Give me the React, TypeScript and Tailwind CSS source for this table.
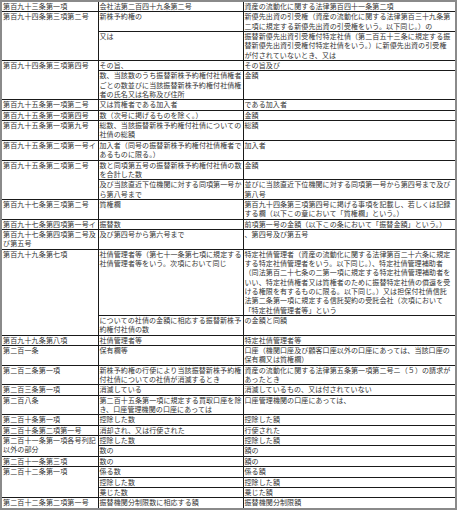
type Line = string | string[]
type Sub = [Line, Line]
type Row = { head: Line; subs: Sub[] }

const rows: Row[] = [
  { head: '第百九十三条第一項', subs: [['会社法第二百四十九条第二号', '資産の流動化に関する法律第百四十一条第二項']] },
  {
    head: '第百九十四条第三項第二号',
    subs: [
      ['新株予約権の', ['新優先出資の引受権（資産の流動化に関する法律第百三十九条第', '二項に規定する新優先出資の引受権をいう。以下同じ。）の']],
      ['又は', ['振替新優先出資引受権付特定社債（第二百五十三条に規定する振', '替新優先出資引受権付特定社債をいう。）に新優先出資の引受権', 'が付されていないとき、又は']],
    ],
  },
  {
    head: '第百九十四条第三項第四号',
    subs: [
      ['その旨、', 'その旨及び'],
      [['数、当該数のうち振替新株予約権付社債権者', 'ごとの数並びに当該振替新株予約権付社債権', '者の氏名又は名称及び住所'], '金額'],
    ],
  },
  { head: '第百九十五条第一項第二号', subs: [['又は質権者である加入者', 'である加入者']] },
  { head: '第百九十五条第一項第四号', subs: [['数（次号に掲げるものを除く。）', '金額']] },
  { head: '第百九十五条第一項第九号', subs: [[['総数、当該振替新株予約権付社債についての', '社債の総額'], '総額']] },
  { head: '第百九十五条第二項第一号イ', subs: [[['加入者（同号の振替新株予約権付社債権者で', 'あるものに限る。）'], '加入者']] },
  {
    head: '第百九十五条第二項第二号',
    subs: [
      [['数と同項第五号の振替新株予約権付社債の数', 'を合計した数'], '金額'],
      [['及び当該直近下位機関に対する同項第一号か', 'ら第八号まで'], ['並びに当該直近下位機関に対する同項第一号から第四号まで及び', '第八号']],
    ],
  },
  {
    head: '第百九十七条第三項第二号',
    subs: [['質権欄', ['第百九十四条第三項第四号に掲げる事項を記載し、若しくは記録', 'する欄（以下この章において「質権欄」という。）']]],
  },
  { head: '第百九十七条第四項第一号イ', subs: [['振替数', '前項第一号の金額（以下この条において「振替金額」という。）']] },
  { head: ['第百九十七条第四項第二号及', 'び第五号'], subs: [['及び第四号から第六号まで', '、第四号及び第五号']] },
  {
    head: '第百九十九条第七項',
    subs: [
      [
        ['社債管理者等（第七十一条第七項に規定する', '社債管理者等をいう。次項において同じ'],
        [
          '特定社債管理者（資産の流動化に関する法律第百二十六条に規定',
          'する特定社債管理者をいう。以下同じ。）、特定社債管理補助者',
          '（同法第百二十七条の二第一項に規定する特定社債管理補助者を',
          'いい、特定社債権者又は質権者のために振替特定社債の償還を受',
          'ける権限を有するものに限る。以下同じ。）又は担保付社債信託',
          '法第二条第一項に規定する信託契約の受託会社（次項において',
          '「特定社債管理者等」という',
        ],
      ],
      [['についての社債の金額に相応する振替新株予', '約権付社債の数'], 'の金額と同額'],
    ],
  },
  { head: '第百九十九条第八項', subs: [['社債管理者等', '特定社債管理者等']] },
  { head: '第二百一条', subs: [['保有欄等', ['口座（機関口座及び顧客口座以外の口座にあっては、当該口座の', '保有欄又は質権欄）']]] },
  {
    head: '第二百二条第一項',
    subs: [[
      ['新株予約権の行使により当該振替新株予約権', '付社債についての社債が消滅するとき'],
      ['資産の流動化に関する法律第五条第一項第二号ニ（５）の請求が', 'あったとき'],
    ]],
  },
  { head: '第二百三条第一項', subs: [['消滅している', '消滅しているもの、又は付されていない']] },
  { head: '第二百八条', subs: [[['第二百十五条第一項に規定する買取口座を除', 'き、口座管理機関の口座にあっては'], '口座管理機関の口座にあっては、']] },
  { head: '第二百十条第一項', subs: [['控除した数', '控除した額']] },
  { head: '第二百十条第二項第一号', subs: [['消却され、又は行使された', '行使された']] },
  { head: ['第二百十一条第一項各号列記', '以外の部分'], subs: [['控除した数', '控除した額'], ['数の', '額の']] },
  { head: '第二百十一条第三項', subs: [['数の', '額の']] },
  { head: '第二百十二条第一項', subs: [['係る数', '係る額'], ['控除した数', '控除した額'], ['乗じた数', '乗じた額']] },
  { head: '第二百十二条第二項第一号', subs: [['振替機関分制限数に相応する額', '振替機関分制限額']] },
]

function Text({ value }: { value: Line }) {
  const lines = Array.isArray(value) ? value : [value]
  return (
    <>
      {lines.map((l, i) => (
        <div key={i}>{l}</div>
      ))}
    </>
  )
}

const cell = 'border border-[#1a1a1a] px-px py-0 align-top whitespace-nowrap overflow-hidden'

export default function App() {
  return (
    <div className="bg-white w-[458px] h-[513px] overflow-hidden">
      <table
        className="table-fixed border-collapse w-[457px] border-2 border-[#8a8a8a] text-[7px] leading-[9.35px] text-[#333]"
        style={{ fontFamily: '"Noto Sans CJK JP", "Noto Sans", sans-serif' }}
      >
        <colgroup>
          <col className="w-[97px]" />
          <col className="w-[145px]" />
          <col />
        </colgroup>
        <tbody>
          {rows.map((row, ri) =>
            row.subs.map((sub, si) => (
              <tr key={`${ri}-${si}`}>
                {si === 0 && (
                  <td rowSpan={row.subs.length} className={`${cell} tracking-[0.15px]`}>
                    <Text value={row.head} />
                  </td>
                )}
                <td className={`${cell} tracking-[0.1px]`}>
                  <Text value={sub[0]} />
                </td>
                <td className={`${cell} tracking-[0.1px]`}>
                  <Text value={sub[1]} />
                </td>
              </tr>
            ))
          )}
        </tbody>
      </table>
    </div>
  )
}
